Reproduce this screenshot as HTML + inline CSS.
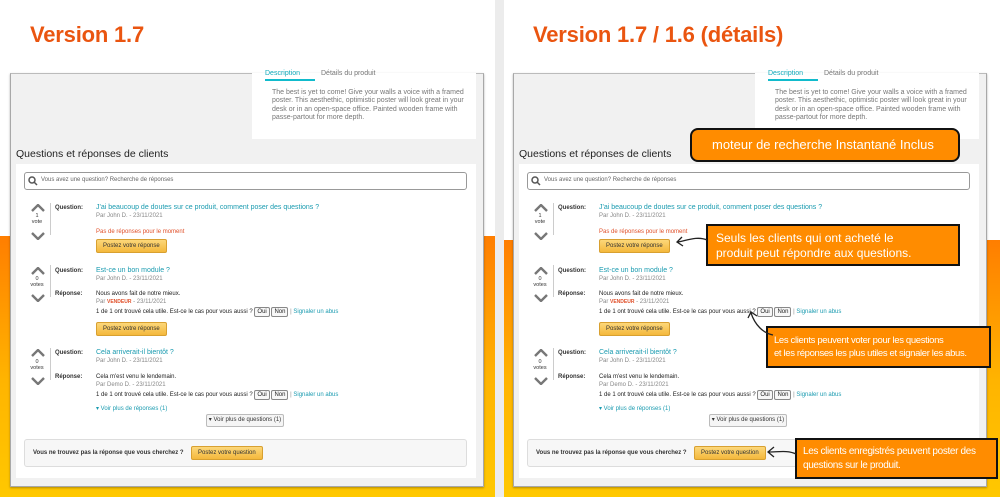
<!DOCTYPE html>
<html><head><meta charset="utf-8"><style>
*{margin:0;padding:0;box-sizing:border-box}
body{width:1000px;height:497px;position:relative;overflow:hidden;background:#fff;font-family:"Liberation Sans",sans-serif}
.half{position:absolute;top:0;height:497px;background:#fff}
.grad{position:absolute;left:0;right:0;bottom:0;background:linear-gradient(#ff7e00,#ffb400 55%,#ffc800)}
.title{position:absolute;top:22px;font-weight:bold;font-size:22px;color:#ea5510;letter-spacing:-0.2px}
.panel{position:absolute;top:73px;width:474px;height:414px;background:#f1f1f1;border:1px solid #a8a8a8;border-top:1px solid #bbb;box-shadow:0 1px 2px rgba(0,0,0,.3)}
.a{position:absolute;white-space:nowrap}
.desc{left:241px;top:-1px;width:224px;height:66px;background:#fff}
.tab{font-size:7px;color:#777}
.dtext{left:20px;top:16px;font-size:7px;line-height:8.3px;color:#777;white-space:normal;width:200px}
.h{font-size:10.5px;color:#222;left:5px;top:74px}
.box{left:5px;top:90px;width:460px;height:314px;background:#fff}
.search{left:8px;top:8px;width:443px;height:18px;border:1.5px solid #999;border-radius:3px;font-size:6px;color:#666;padding:4px 0 0 16px}
.lbl{font-size:6px;font-weight:bold;color:#333}
.lnk{font-size:7px;color:#1a9bb0}
.par{font-size:6px;color:#888}
.t{font-size:6px;color:#222}
.btn{font-size:6px;color:#333;background:linear-gradient(#fcd77a,#f4b83c);border:1px solid #d8a030;border-radius:2px;padding:3px 6px}
.sb{font-size:6px;border:1px solid #888;border-radius:2px;padding:1px 2px;background:#f7f7f7}
.vote{font-size:5.5px;color:#333;text-align:center;width:20px}
.ar{position:absolute;width:14px;height:8px}
.vl{position:absolute;width:1px;background:#ccc}
.co{position:absolute;background:#ff8c00;border:2px solid #111;color:#fff;font-size:11.5px;line-height:15px;padding:0 8px;white-space:nowrap;overflow:hidden}
</style></head><body>

<div class="half" style="left:0;width:495px"><div class="grad" style="top:236px"></div></div>
<div class="half" style="left:504px;width:496px"><div class="grad" style="top:240px"></div></div>
<div style="position:absolute;left:495px;top:0;width:9px;height:497px;background:#ececec"></div>

<div class="title" style="left:30px">Version 1.7</div>
<div class="title" style="left:533px">Version 1.7 / 1.6 (détails)</div>

<div class="panel" style="left:10px">
 <div class="a desc">
  <div class="a tab" style="left:13px;top:-3px;color:#1ab;">Description</div>
  <div class="a" style="left:13px;top:6px;width:50px;height:2px;background:#1bc"></div>
  <div class="a tab" style="left:69px;top:-3px">Détails du produit</div>
  <div class="a dtext">The best is yet to come! Give your walls a voice with a framed poster. This aesthethic, optimistic poster will look great in your desk or in an open-space office. Painted wooden frame with passe-partout for more depth.</div>
 </div>
 <div class="a h">Questions et réponses de clients</div>
 <div class="a box">
  <div class="a search"><svg class="a" style="left:3px;top:3px" width="10" height="10"><circle cx="4" cy="4" r="3" fill="none" stroke="#555" stroke-width="1.5"/><path d="M6 6l3 3" stroke="#555" stroke-width="1.5"/></svg>Vous avez une question? Recherche de réponses</div>
 </div>
</div>

<div class="panel" style="left:513px">
 <div class="a desc">
  <div class="a tab" style="left:13px;top:-3px;color:#1ab;">Description</div>
  <div class="a" style="left:13px;top:6px;width:50px;height:2px;background:#1bc"></div>
  <div class="a tab" style="left:69px;top:-3px">Détails du produit</div>
  <div class="a dtext">The best is yet to come! Give your walls a voice with a framed poster. This aesthethic, optimistic poster will look great in your desk or in an open-space office. Painted wooden frame with passe-partout for more depth.</div>
 </div>
 <div class="a h">Questions et réponses de clients</div>
 <div class="a box">
  <div class="a search"><svg class="a" style="left:3px;top:3px" width="10" height="10"><circle cx="4" cy="4" r="3" fill="none" stroke="#555" stroke-width="1.5"/><path d="M6 6l3 3" stroke="#555" stroke-width="1.5"/></svg>Vous avez une question? Recherche de réponses</div>
 </div>
</div>

<div style="position:absolute;left:0;top:0;width:495px;height:497px">
 <svg class="ar" style="left:31px;top:204px" viewBox="0 0 14 8"><path d="M1 7L7 1l6 6" fill="none" stroke="#777" stroke-width="2.4"/></svg>
 <div class="a vote" style="left:27px;top:213px">1<br>vote</div>
 <svg class="ar" style="left:31px;top:232px" viewBox="0 0 14 8"><path d="M1 1l6 6 6-6" fill="none" stroke="#777" stroke-width="2.4"/></svg>
 <div class="vl" style="left:50px;top:203px;height:32px"></div>
 <div class="a lbl" style="left:55px;top:205px">Question:</div>
 <div class="a lnk" style="left:96px;top:204px">J'ai beaucoup de doutes sur ce produit, comment poser des questions ?</div>
 <div class="a par" style="left:96px;top:213px">Par John D. - 23/11/2021</div>
 <div class="a t" style="left:96px;top:229px;color:#e0502a">Pas de réponses pour le moment</div>
 <div class="a btn" style="left:96px;top:239px">Postez votre réponse</div>

 <svg class="ar" style="left:31px;top:267px" viewBox="0 0 14 8"><path d="M1 7L7 1l6 6" fill="none" stroke="#777" stroke-width="2.4"/></svg>
 <div class="a vote" style="left:27px;top:276px">0<br>votes</div>
 <svg class="ar" style="left:31px;top:294px" viewBox="0 0 14 8"><path d="M1 1l6 6 6-6" fill="none" stroke="#777" stroke-width="2.4"/></svg>
 <div class="vl" style="left:50px;top:265px;height:32px"></div>
 <div class="a lbl" style="left:55px;top:268px">Question:</div>
 <div class="a lnk" style="left:96px;top:267px">Est-ce un bon module ?</div>
 <div class="a par" style="left:96px;top:276px">Par John D. - 23/11/2021</div>
 <div class="a lbl" style="left:55px;top:291px">Réponse:</div>
 <div class="a t" style="left:96px;top:291px">Nous avons fait de notre mieux.</div>
 <div class="a par" style="left:96px;top:299px">Par <span style="color:#e0502a;font-weight:bold;font-size:5px">VENDEUR</span> - 23/11/2021</div>
 <div class="a t" style="left:96px;top:309px">1 de 1 ont trouvé cela utile. Est-ce le cas pour vous aussi ? <span class="sb">Oui</span> <span class="sb">Non</span> <span style="color:#888">|</span> <span style="color:#1a9bb0">Signaler un abus</span></div>
 <div class="a btn" style="left:96px;top:322px">Postez votre réponse</div>

 <svg class="ar" style="left:31px;top:349px" viewBox="0 0 14 8"><path d="M1 7L7 1l6 6" fill="none" stroke="#777" stroke-width="2.4"/></svg>
 <div class="a vote" style="left:27px;top:359px">0<br>votes</div>
 <svg class="ar" style="left:31px;top:377px" viewBox="0 0 14 8"><path d="M1 1l6 6 6-6" fill="none" stroke="#777" stroke-width="2.4"/></svg>
 <div class="vl" style="left:50px;top:348px;height:32px"></div>
 <div class="a lbl" style="left:55px;top:350px">Question:</div>
 <div class="a lnk" style="left:96px;top:349px">Cela arriverait-il bientôt ?</div>
 <div class="a par" style="left:96px;top:358px">Par John D. - 23/11/2021</div>
 <div class="a lbl" style="left:55px;top:374px">Réponse:</div>
 <div class="a t" style="left:96px;top:374px">Cela m'est venu le lendemain.</div>
 <div class="a par" style="left:96px;top:382px">Par Demo D. - 23/11/2021</div>
 <div class="a t" style="left:96px;top:392px">1 de 1 ont trouvé cela utile. Est-ce le cas pour vous aussi ? <span class="sb">Oui</span> <span class="sb">Non</span> <span style="color:#888">|</span> <span style="color:#1a9bb0">Signaler un abus</span></div>
 <div class="a" style="left:96px;top:405px;font-size:6px;color:#1a9bb0">▾ Voir plus de réponses (1)</div>
 <div class="a" style="left:206px;top:414px;width:78px;height:13px;border:1px solid #bbb;border-radius:2px;background:#f5f5f5;font-size:6px;color:#333;text-align:center;line-height:11px">▾ Voir plus de questions (1)</div>
 <div class="a" style="left:24px;top:439px;width:443px;height:28px;border:1px solid #ddd;border-radius:3px;background:#f7f7f7"></div>
 <div class="a lbl" style="left:33px;top:450px">Vous ne trouvez pas la réponse que vous cherchez ?</div>
 <div class="a btn" style="left:191px;top:446px">Postez votre question</div>
</div>

<div style="position:absolute;left:503px;top:0;width:497px;height:497px">
 <svg class="ar" style="left:31px;top:204px" viewBox="0 0 14 8"><path d="M1 7L7 1l6 6" fill="none" stroke="#777" stroke-width="2.4"/></svg>
 <div class="a vote" style="left:27px;top:213px">1<br>vote</div>
 <svg class="ar" style="left:31px;top:232px" viewBox="0 0 14 8"><path d="M1 1l6 6 6-6" fill="none" stroke="#777" stroke-width="2.4"/></svg>
 <div class="vl" style="left:50px;top:203px;height:32px"></div>
 <div class="a lbl" style="left:55px;top:205px">Question:</div>
 <div class="a lnk" style="left:96px;top:204px">J'ai beaucoup de doutes sur ce produit, comment poser des questions ?</div>
 <div class="a par" style="left:96px;top:213px">Par John D. - 23/11/2021</div>
 <div class="a t" style="left:96px;top:229px;color:#e0502a">Pas de réponses pour le moment</div>
 <div class="a btn" style="left:96px;top:239px">Postez votre réponse</div>

 <svg class="ar" style="left:31px;top:267px" viewBox="0 0 14 8"><path d="M1 7L7 1l6 6" fill="none" stroke="#777" stroke-width="2.4"/></svg>
 <div class="a vote" style="left:27px;top:276px">0<br>votes</div>
 <svg class="ar" style="left:31px;top:294px" viewBox="0 0 14 8"><path d="M1 1l6 6 6-6" fill="none" stroke="#777" stroke-width="2.4"/></svg>
 <div class="vl" style="left:50px;top:265px;height:32px"></div>
 <div class="a lbl" style="left:55px;top:268px">Question:</div>
 <div class="a lnk" style="left:96px;top:267px">Est-ce un bon module ?</div>
 <div class="a par" style="left:96px;top:276px">Par John D. - 23/11/2021</div>
 <div class="a lbl" style="left:55px;top:291px">Réponse:</div>
 <div class="a t" style="left:96px;top:291px">Nous avons fait de notre mieux.</div>
 <div class="a par" style="left:96px;top:299px">Par <span style="color:#e0502a;font-weight:bold;font-size:5px">VENDEUR</span> - 23/11/2021</div>
 <div class="a t" style="left:96px;top:309px">1 de 1 ont trouvé cela utile. Est-ce le cas pour vous aussi ? <span class="sb">Oui</span> <span class="sb">Non</span> <span style="color:#888">|</span> <span style="color:#1a9bb0">Signaler un abus</span></div>
 <div class="a btn" style="left:96px;top:322px">Postez votre réponse</div>

 <svg class="ar" style="left:31px;top:349px" viewBox="0 0 14 8"><path d="M1 7L7 1l6 6" fill="none" stroke="#777" stroke-width="2.4"/></svg>
 <div class="a vote" style="left:27px;top:359px">0<br>votes</div>
 <svg class="ar" style="left:31px;top:377px" viewBox="0 0 14 8"><path d="M1 1l6 6 6-6" fill="none" stroke="#777" stroke-width="2.4"/></svg>
 <div class="vl" style="left:50px;top:348px;height:32px"></div>
 <div class="a lbl" style="left:55px;top:350px">Question:</div>
 <div class="a lnk" style="left:96px;top:349px">Cela arriverait-il bientôt ?</div>
 <div class="a par" style="left:96px;top:358px">Par John D. - 23/11/2021</div>
 <div class="a lbl" style="left:55px;top:374px">Réponse:</div>
 <div class="a t" style="left:96px;top:374px">Cela m'est venu le lendemain.</div>
 <div class="a par" style="left:96px;top:382px">Par Demo D. - 23/11/2021</div>
 <div class="a t" style="left:96px;top:392px">1 de 1 ont trouvé cela utile. Est-ce le cas pour vous aussi ? <span class="sb">Oui</span> <span class="sb">Non</span> <span style="color:#888">|</span> <span style="color:#1a9bb0">Signaler un abus</span></div>
 <div class="a" style="left:96px;top:405px;font-size:6px;color:#1a9bb0">▾ Voir plus de réponses (1)</div>
 <div class="a" style="left:206px;top:414px;width:78px;height:13px;border:1px solid #bbb;border-radius:2px;background:#f5f5f5;font-size:6px;color:#333;text-align:center;line-height:11px">▾ Voir plus de questions (1)</div>
 <div class="a" style="left:24px;top:439px;width:443px;height:28px;border:1px solid #ddd;border-radius:3px;background:#f7f7f7"></div>
 <div class="a lbl" style="left:33px;top:450px">Vous ne trouvez pas la réponse que vous cherchez ?</div>
 <div class="a btn" style="left:191px;top:446px">Postez votre question</div>
</div>

<div class="co" style="left:690px;top:128px;width:270px;height:34px;border-radius:8px;font-size:13px;line-height:30px;padding-left:20px">moteur de recherche Instantané Inclus</div>
<div class="co" style="left:706px;top:224px;width:254px;height:42px;padding-top:5px;font-size:12px">Seuls les clients qui ont acheté le<br>produit peut répondre aux questions.</div>
<div class="co" style="left:766px;top:326px;width:225px;height:42px;padding:6px 0 0 6px;font-size:9.5px;line-height:13px;letter-spacing:-0.35px">Les clients peuvent voter pour les questions<br>et les réponses les plus utiles et signaler les abus.</div>
<div class="co" style="left:795px;top:438px;width:203px;height:41px;padding:5px 0 0 6px;font-size:10px;line-height:14px;letter-spacing:-0.35px">Les clients enregistrés peuvent poster des<br>questions sur le produit.</div>

<svg class="a" style="left:670px;top:230px" width="40" height="20"><path d="M37 10C28 6 18 10 8 12M12 7L7 12l6 4" fill="none" stroke="#222" stroke-width="1.3"/></svg>
<svg class="a" style="left:745px;top:305px" width="30" height="35"><path d="M28 30C18 28 10 20 6 8M3 13L6 7l6 4" fill="none" stroke="#222" stroke-width="1.3"/></svg>
<svg class="a" style="left:763px;top:442px" width="34" height="20"><path d="M33 12C25 8 15 10 6 10M11 5L5 10l6 5" fill="none" stroke="#222" stroke-width="1.3"/></svg>
</body></html>
